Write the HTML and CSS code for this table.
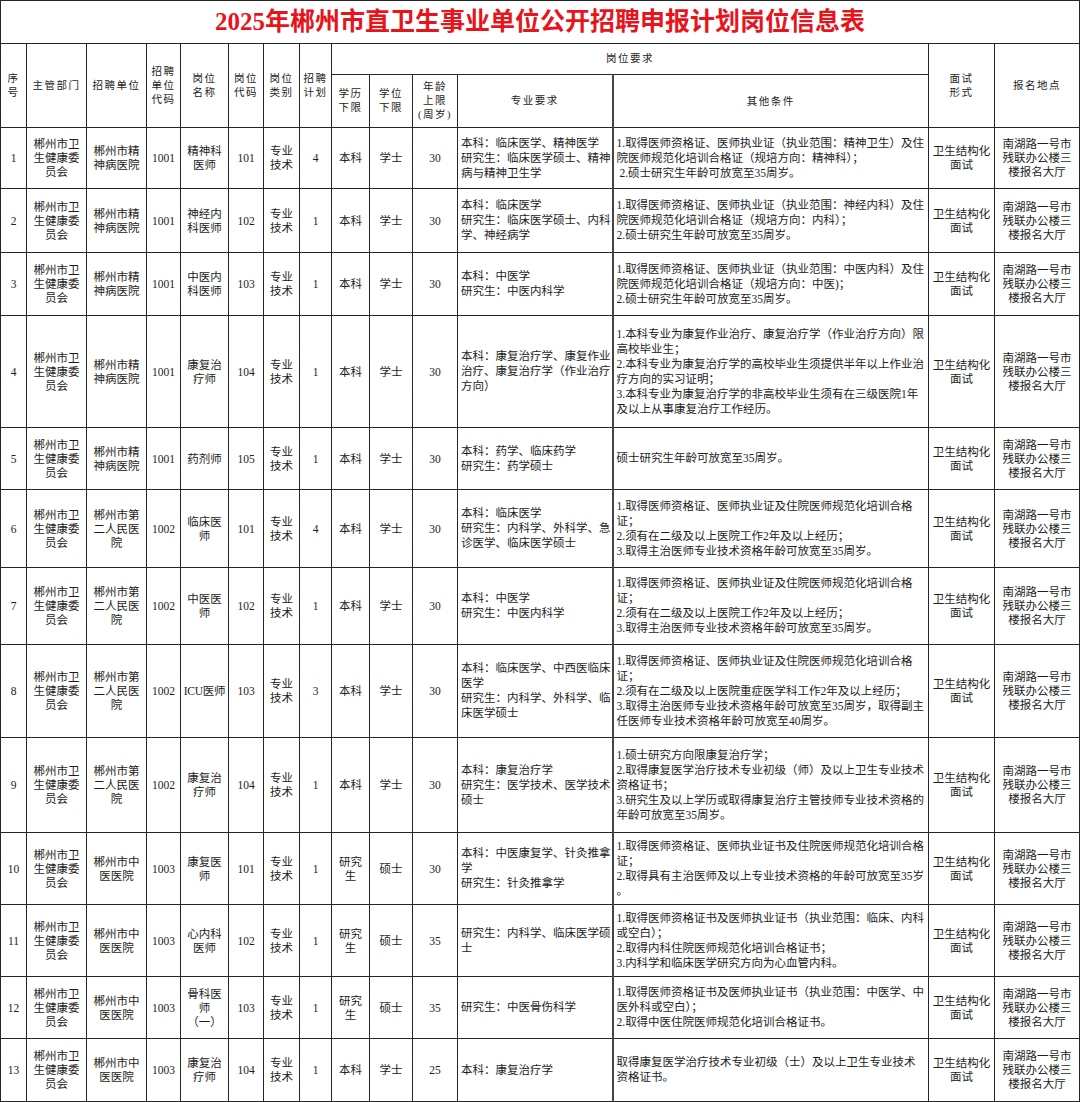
FILE: index.html
```html
<!DOCTYPE html>
<html lang="zh-CN">
<head>
<meta charset="utf-8">
<title>2025年郴州市直卫生事业单位公开招聘申报计划岗位信息表</title>
<link rel="stylesheet" href="styles.css">
</head>
<body>
<table class="sheet">
<colgroup>
<col class="c-no"><col class="c-dept"><col class="c-unit"><col class="c-ucode"><col class="c-pname"><col class="c-pcode"><col class="c-ptype"><col class="c-plan"><col class="c-edu"><col class="c-deg"><col class="c-age"><col class="c-major"><col class="c-other"><col class="c-iv"><col class="c-place">
</colgroup>
<tr class="r-title"><td colspan="15" class="title">2025年郴州市直卫生事业单位公开招聘申报计划岗位信息表</td></tr>
<tr class="r-h1">
<th rowspan="2">序<br>号</th>
<th rowspan="2">主管部门</th>
<th rowspan="2">招聘单位</th>
<th rowspan="2">招聘<br>单位<br>代码</th>
<th rowspan="2">岗位<br>名称</th>
<th rowspan="2">岗位<br>代码</th>
<th rowspan="2">岗位<br>类别</th>
<th rowspan="2">招聘<br>计划</th>
<th colspan="5">岗位要求</th>
<th rowspan="2">面试<br>形式</th>
<th rowspan="2">报名地点</th>
</tr>
<tr class="r-h2">
<th>学历<br>下限</th>
<th>学位<br>下限</th>
<th>年龄<br>上限<br>(周岁)</th>
<th>专业要求</th>
<th class="other">其他条件</th>
</tr>

<tr class="r1">
<td>1</td><td>郴州市卫<br>生健康委<br>员会</td><td>郴州市精<br>神病医院</td><td>1001</td><td>精神科<br>医师</td><td>101</td><td>专业<br>技术</td><td>4</td><td>本科</td><td>学士</td><td>30</td>
<td class="major">本科：临床医学、精神医学<br>研究生：临床医学硕士、精神<br>病与精神卫生学</td>
<td class="other">1.取得医师资格证、医师执业证（执业范围：精神卫生）及住<br>院医师规范化培训合格证（规培方向：精神科）；<br>&nbsp;2.硕士研究生年龄可放宽至35周岁。</td>
<td>卫生结构化<br>面试</td><td>南湖路一号市<br>残联办公楼三<br>楼报名大厅</td>
</tr>

<tr class="r2">
<td>2</td><td>郴州市卫<br>生健康委<br>员会</td><td>郴州市精<br>神病医院</td><td>1001</td><td>神经内<br>科医师</td><td>102</td><td>专业<br>技术</td><td>1</td><td>本科</td><td>学士</td><td>30</td>
<td class="major">本科：临床医学<br>研究生：临床医学硕士、内科<br>学、神经病学</td>
<td class="other">1.取得医师资格证、医师执业证（执业范围：神经内科）及住<br>院医师规范化培训合格证（规培方向：内科）；<br>2.硕士研究生年龄可放宽至35周岁。</td>
<td>卫生结构化<br>面试</td><td>南湖路一号市<br>残联办公楼三<br>楼报名大厅</td>
</tr>

<tr class="r3">
<td>3</td><td>郴州市卫<br>生健康委<br>员会</td><td>郴州市精<br>神病医院</td><td>1001</td><td>中医内<br>科医师</td><td>103</td><td>专业<br>技术</td><td>1</td><td>本科</td><td>学士</td><td>30</td>
<td class="major">本科：中医学<br>研究生：中医内科学</td>
<td class="other">1.取得医师资格证、医师执业证（执业范围：中医内科）及住<br>院医师规范化培训合格证（规培方向：中医)；<br>2.硕士研究生年龄可放宽至35周岁。</td>
<td>卫生结构化<br>面试</td><td>南湖路一号市<br>残联办公楼三<br>楼报名大厅</td>
</tr>

<tr class="r4">
<td>4</td><td>郴州市卫<br>生健康委<br>员会</td><td>郴州市精<br>神病医院</td><td>1001</td><td>康复治<br>疗师</td><td>104</td><td>专业<br>技术</td><td>1</td><td>本科</td><td>学士</td><td>30</td>
<td class="major">本科：康复治疗学、康复作业<br>治疗、康复治疗学（作业治疗<br>方向）</td>
<td class="other">1.本科专业为康复作业治疗、康复治疗学（作业治疗方向）限<br>高校毕业生；<br>2.本科专业为康复治疗学的高校毕业生须提供半年以上作业治<br>疗方向的实习证明；<br>3.本科专业为康复治疗学的非高校毕业生须有在三级医院1年<br>及以上从事康复治疗工作经历。</td>
<td>卫生结构化<br>面试</td><td>南湖路一号市<br>残联办公楼三<br>楼报名大厅</td>
</tr>

<tr class="r5">
<td>5</td><td>郴州市卫<br>生健康委<br>员会</td><td>郴州市精<br>神病医院</td><td>1001</td><td>药剂师</td><td>105</td><td>专业<br>技术</td><td>1</td><td>本科</td><td>学士</td><td>30</td>
<td class="major">本科：药学、临床药学<br>研究生：药学硕士</td>
<td class="other">硕士研究生年龄可放宽至35周岁。</td>
<td>卫生结构化<br>面试</td><td>南湖路一号市<br>残联办公楼三<br>楼报名大厅</td>
</tr>

<tr class="r6">
<td>6</td><td>郴州市卫<br>生健康委<br>员会</td><td>郴州市第<br>二人民医<br>院</td><td>1002</td><td>临床医<br>师</td><td>101</td><td>专业<br>技术</td><td>4</td><td>本科</td><td>学士</td><td>30</td>
<td class="major">本科：临床医学<br>研究生：内科学、外科学、急<br>诊医学、临床医学硕士</td>
<td class="other">1.取得医师资格证、医师执业证及住院医师规范化培训合格<br>证；<br>2.须有在二级及以上医院工作2年及以上经历；<br>3.取得主治医师专业技术资格年龄可放宽至35周岁。</td>
<td>卫生结构化<br>面试</td><td>南湖路一号市<br>残联办公楼三<br>楼报名大厅</td>
</tr>

<tr class="r7">
<td>7</td><td>郴州市卫<br>生健康委<br>员会</td><td>郴州市第<br>二人民医<br>院</td><td>1002</td><td>中医医<br>师</td><td>102</td><td>专业<br>技术</td><td>1</td><td>本科</td><td>学士</td><td>30</td>
<td class="major">本科：中医学<br>研究生：中医内科学</td>
<td class="other">1.取得医师资格证、医师执业证及住院医师规范化培训合格<br>证；<br>2.须有在二级及以上医院工作2年及以上经历；<br>3.取得主治医师专业技术资格年龄可放宽至35周岁。</td>
<td>卫生结构化<br>面试</td><td>南湖路一号市<br>残联办公楼三<br>楼报名大厅</td>
</tr>

<tr class="r8">
<td>8</td><td>郴州市卫<br>生健康委<br>员会</td><td>郴州市第<br>二人民医<br>院</td><td>1002</td><td class="tight">ICU医师</td><td>103</td><td>专业<br>技术</td><td>3</td><td>本科</td><td>学士</td><td>30</td>
<td class="major">本科：临床医学、中西医临床<br>医学<br>研究生：内科学、外科学、临<br>床医学硕士</td>
<td class="other">1.取得医师资格证、医师执业证及住院医师规范化培训合格<br>证；<br>2.须有在二级及以上医院重症医学科工作2年及以上经历；<br>3.取得主治医师专业技术资格年龄可放宽至35周岁，取得副主<br>任医师专业技术资格年龄可放宽至40周岁。</td>
<td>卫生结构化<br>面试</td><td>南湖路一号市<br>残联办公楼三<br>楼报名大厅</td>
</tr>

<tr class="r9">
<td>9</td><td>郴州市卫<br>生健康委<br>员会</td><td>郴州市第<br>二人民医<br>院</td><td>1002</td><td>康复治<br>疗师</td><td>104</td><td>专业<br>技术</td><td>1</td><td>本科</td><td>学士</td><td>30</td>
<td class="major">本科：康复治疗学<br>研究生：医学技术、医学技术<br>硕士</td>
<td class="other">1.硕士研究方向限康复治疗学；<br>2.取得康复医学治疗技术专业初级（师）及以上卫生专业技术<br>资格证书；<br>3.研究生及以上学历或取得康复治疗主管技师专业技术资格的<br>年龄可放宽至35周岁。</td>
<td>卫生结构化<br>面试</td><td>南湖路一号市<br>残联办公楼三<br>楼报名大厅</td>
</tr>

<tr class="r10">
<td>10</td><td>郴州市卫<br>生健康委<br>员会</td><td>郴州市中<br>医医院</td><td>1003</td><td>康复医<br>师</td><td>101</td><td>专业<br>技术</td><td>1</td><td>研究<br>生</td><td>硕士</td><td>30</td>
<td class="major">本科：中医康复学、针灸推拿<br>学<br>研究生：针灸推拿学</td>
<td class="other">1.取得医师资格证、医师执业证书及住院医师规范化培训合格<br>证；<br>2.取得具有主治医师及以上专业技术资格的年龄可放宽至35岁<br>。</td>
<td>卫生结构化<br>面试</td><td>南湖路一号市<br>残联办公楼三<br>楼报名大厅</td>
</tr>

<tr class="r11">
<td>11</td><td>郴州市卫<br>生健康委<br>员会</td><td>郴州市中<br>医医院</td><td>1003</td><td>心内科<br>医师</td><td>102</td><td>专业<br>技术</td><td>1</td><td>研究<br>生</td><td>硕士</td><td>35</td>
<td class="major">研究生：内科学、临床医学硕<br>士</td>
<td class="other">1.取得医师资格证书及医师执业证书（执业范围：临床、内科<br>或空白）；<br>2.取得内科住院医师规范化培训合格证书；<br>3.内科学和临床医学研究方向为心血管内科。</td>
<td>卫生结构化<br>面试</td><td>南湖路一号市<br>残联办公楼三<br>楼报名大厅</td>
</tr>

<tr class="r12">
<td>12</td><td>郴州市卫<br>生健康委<br>员会</td><td>郴州市中<br>医医院</td><td>1003</td><td>骨科医<br>师<br>（一）</td><td>103</td><td>专业<br>技术</td><td>1</td><td>研究<br>生</td><td>硕士</td><td>35</td>
<td class="major">研究生：中医骨伤科学</td>
<td class="other">1.取得医师资格证书及医师执业证书（执业范围：中医学、中<br>医外科或空白）；<br>2.取得中医住院医师规范化培训合格证书。</td>
<td>卫生结构化<br>面试</td><td>南湖路一号市<br>残联办公楼三<br>楼报名大厅</td>
</tr>

<tr class="r13">
<td>13</td><td>郴州市卫<br>生健康委<br>员会</td><td>郴州市中<br>医医院</td><td>1003</td><td>康复治<br>疗师</td><td>104</td><td>专业<br>技术</td><td>1</td><td>本科</td><td>学士</td><td>25</td>
<td class="major">本科：康复治疗学</td>
<td class="other">取得康复医学治疗技术专业初级（士）及以上卫生专业技术<br>资格证书。</td>
<td>卫生结构化<br>面试</td><td>南湖路一号市<br>残联办公楼三<br>楼报名大厅</td>
</tr>
</table>
</body>
</html>
```

FILE: styles.css
```css
html, body {
  margin: 0;
  padding: 0;
  background: #ffffff;
}

.sheet {
  border-collapse: collapse;
  table-layout: fixed;
  width: 1079px;
  font-family: "Liberation Serif", "Noto Sans CJK SC", serif;
  color: #1c1c1c;
}

.c-no { width: 26px; }
.c-dept { width: 60px; }
.c-unit { width: 60px; }
.c-ucode { width: 34px; }
.c-pname { width: 48px; }
.c-pcode { width: 35px; }
.c-ptype { width: 36px; }
.c-plan { width: 32px; }
.c-edu { width: 38px; }
.c-deg { width: 43px; }
.c-age { width: 45px; }
.c-major { width: 155px; }
.c-other { width: 316px; }
.c-iv { width: 66px; }
.c-place { width: 85px; }

.sheet td,
.sheet th {
  border: 1px solid #262626;
  padding: 0;
  text-align: center;
  vertical-align: middle;
  font-size: 11.5px;
  line-height: 14px;
  font-weight: 400;
  white-space: nowrap;
  overflow: hidden;
}

.sheet th {
  font-size: 10.5px;
  letter-spacing: 1.5px;
  line-height: 14px;
}

.r-title { height: 43px; }
.r-h1 { height: 31px; }
.r-h2 { height: 53px; }

.sheet .title {
  font-family: "Liberation Serif", "Noto Sans CJK SC", serif;
  font-size: 25px;
  line-height: 30px;
  font-weight: 700;
  color: #e8141c;
  letter-spacing: 0;
}

.sheet .major,
.sheet .other {
  text-align: left;
  padding-left: 3px;
  line-height: 15px;
}

.sheet .other {
  border-left: 2px solid #444444;
}

.sheet th.other {
  text-align: center;
  padding-left: 0;
}

.sheet .tight {
  letter-spacing: -0.3px;
}

.r1 { height: 61px; }
.r2 { height: 64px; }
.r3 { height: 63px; }
.r4 { height: 112px; }
.r5 { height: 62px; }
.r6 { height: 78px; }
.r7 { height: 77px; }
.r8 { height: 93px; }
.r9 { height: 95px; }
.r10 { height: 72px; }
.r11 { height: 72px; }
.r12 { height: 62px; }
.r13 { height: 63px; }
```
